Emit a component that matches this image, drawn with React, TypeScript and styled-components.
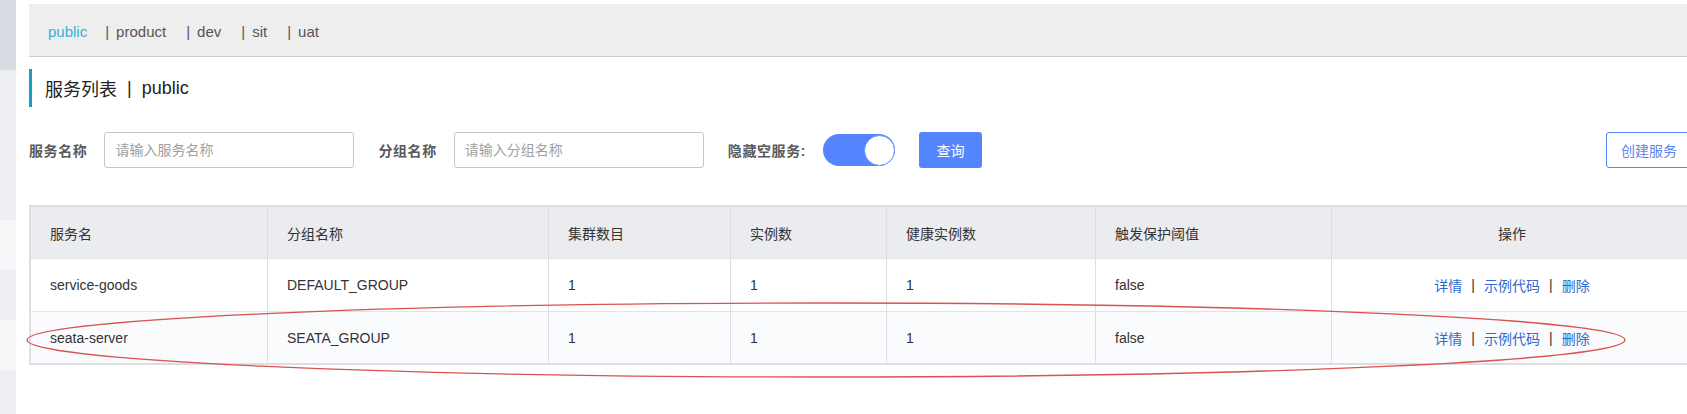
import React from "react";
import styled, { createGlobalStyle } from "styled-components";

const Global = createGlobalStyle`
  html, body { margin: 0; padding: 0; overflow: hidden; background: #ffffff; }
  body {
    font-family: "Liberation Sans", Arial, "Noto Sans CJK SC", sans-serif;
    font-size: 14px;
    color: #333333;
  }
  * { box-sizing: border-box; }
`;

const Page = styled.div`
  position: relative;
  display: flex;
  width: 1700px;
  height: 414px;
`;

const Sidebar = styled.aside`
  width: 16px;
  flex: none;
  display: flex;
  flex-direction: column;
`;

const SideBand = styled.div<{ $h?: number; $tone: string }>`
  flex: ${(p) => (p.$h ? "none" : "1")};
  height: ${(p) => (p.$h ? `${p.$h}px` : "auto")};
  background: ${(p) => p.$tone};
`;

const Main = styled.main`
  margin-left: 13px;
  width: 1663px;
  padding-top: 4px;
  display: flex;
  flex-direction: column;
`;

const NavBar = styled.nav`
  height: 53px;
  background: #eeeeee;
  border-bottom: 1px solid #cccccc;
  display: flex;
  align-items: center;
  padding: 3px 0 0 19px;
  font-size: 15px;
`;

const Tab = styled.span<{ $active?: boolean }>`
  margin-right: ${(p) => (p.$active ? 18 : 20)}px;
  color: ${(p) => (p.$active ? "#36b0d6" : "#555555")};
  white-space: nowrap;
`;

const TabSep = styled.span`
  margin-right: 7px;
  color: #555555;
`;

const Title = styled.h2`
  margin: 12px 0 0;
  height: 38px;
  border-left: 3px solid #1b9bc5;
  padding-left: 13px;
  display: flex;
  align-items: center;
  font-size: 18px;
  font-weight: normal;
  color: #222222;
`;

const TitleSep = styled.span`
  margin: 0 10px 0 10px;
`;

const SearchRow = styled.div`
  margin-top: 25px;
  height: 36px;
  display: flex;
  align-items: center;
`;

const Field = styled.div`
  display: flex;
  align-items: center;
  margin-right: 24px;
`;

const Label = styled.label<{ $gap: number }>`
  font-weight: bold;
  color: #5a5a5a;
  letter-spacing: 0.6px;
  margin-right: ${(p) => p.$gap}px;
  white-space: nowrap;
`;

const Input = styled.input`
  width: 250px;
  height: 36px;
  border: 1px solid #c4c6cf;
  border-radius: 3px;
  padding: 0 10px;
  font: inherit;
  color: #333;
  outline: none;
  &::placeholder { color: #a0a0a0; }
`;

const Switch = styled.div`
  width: 72px;
  height: 32px;
  border-radius: 16px;
  background: #5584ff;
  display: flex;
  justify-content: flex-end;
  align-items: center;
`;

const Knob = styled.span`
  width: 31px;
  height: 31px;
  border-radius: 50%;
  background: #ffffff;
  border: 1px solid #6a93ff;
`;

const PrimaryButton = styled.button`
  height: 36px;
  width: 63px;
  border: none;
  border-radius: 3px;
  background: #5584ff;
  color: #ffffff;
  font: inherit;
  padding: 0;
`;

const OutlineButton = styled.button`
  margin-left: auto;
  height: 36px;
  width: 86px;
  border: 1px solid #5584ff;
  border-radius: 3px;
  background: #ffffff;
  color: #5a84f0;
  font: inherit;
  padding: 0;
`;

const TableBox = styled.div`
  margin-top: 37px;
  border: 2px solid #dcdee3;
  border-right: none;
  width: 1663px;
`;

const Row = styled.div<{ $head?: boolean; $alt?: boolean }>`
  display: grid;
  grid-template-columns: 236px 281px 182px 156px 209px 236px 1fr;
  height: ${(p) => (p.$head ? 52 : 53)}px;
  border-bottom: 1px solid #e1e3e7;
  background: ${(p) => (p.$head ? "#ebecf0" : p.$alt ? "#fafbfd" : "#ffffff")};
  &:last-child {
    border-bottom: none;
    height: 51px;
  }
`;

const Cell = styled.div<{ $center?: boolean }>`
  display: flex;
  align-items: center;
  justify-content: ${(p) => (p.$center ? "center" : "flex-start")};
  padding-left: ${(p) => (p.$center ? 0 : 19)}px;
  color: #333333;
  white-space: nowrap;
  & + & { border-left: 1px solid #dcdee3; }
`;

const Link = styled.a`
  color: #2f69cc;
  text-decoration: none;
`;

const LinkSep = styled.span`
  margin: 0 9px;
  color: #333333;
`;

const Annotation = styled.svg`
  position: absolute;
  left: 0;
  top: 0;
  pointer-events: none;
`;

const headers = ["服务名", "分组名称", "集群数目", "实例数", "健康实例数", "触发保护阈值"];
const rows = [
  ["service-goods", "DEFAULT_GROUP", "1", "1", "1", "false"],
  ["seata-server", "SEATA_GROUP", "1", "1", "1", "false"],
];
const namespaces = ["product", "dev", "sit", "uat"];

export default function App() {
  return (
    <Page>
      <Global />
      <Sidebar>
        <SideBand $h={70} $tone="#d9dde3" />
        <SideBand $h={150} $tone="#eceef1" />
        <SideBand $h={50} $tone="#f5f6f8" />
        <SideBand $h={50} $tone="#eceef1" />
        <SideBand $h={50} $tone="#f5f6f8" />
        <SideBand $tone="#eceef1" />
      </Sidebar>
      <Main>
        <NavBar>
          <Tab $active>public</Tab>
          {namespaces.map((n) => (
            <Tab key={n}>
              <TabSep>|</TabSep>
              {n}
            </Tab>
          ))}
        </NavBar>
        <Title>
          服务列表<TitleSep>|</TitleSep>public
        </Title>
        <SearchRow>
          <Field>
            <Label $gap={17}>服务名称</Label>
            <Input placeholder="请输入服务名称" />
          </Field>
          <Field>
            <Label $gap={17}>分组名称</Label>
            <Input placeholder="请输入分组名称" />
          </Field>
          <Field>
            <Label $gap={17}>隐藏空服务:</Label>
            <Switch>
              <Knob />
            </Switch>
          </Field>
          <PrimaryButton>查询</PrimaryButton>
          <OutlineButton>创建服务</OutlineButton>
        </SearchRow>
        <TableBox>
          <Row $head>
            {headers.map((h) => (
              <Cell key={h}>{h}</Cell>
            ))}
            <Cell $center>操作</Cell>
          </Row>
          {rows.map((r, i) => (
            <Row key={r[0]} $alt={i === 1}>
              {r.map((v, j) => (
                <Cell key={j}>{v}</Cell>
              ))}
              <Cell $center>
                <Link>详情</Link>
                <LinkSep>|</LinkSep>
                <Link>示例代码</Link>
                <LinkSep>|</LinkSep>
                <Link>删除</Link>
              </Cell>
            </Row>
          ))}
        </TableBox>
      </Main>
      <Annotation width="1700" height="414" viewBox="0 0 1700 414">
        <ellipse cx="826" cy="340" rx="799" ry="37" fill="none" stroke="#d9534f" strokeWidth="1.3" />
      </Annotation>
    </Page>
  );
}
